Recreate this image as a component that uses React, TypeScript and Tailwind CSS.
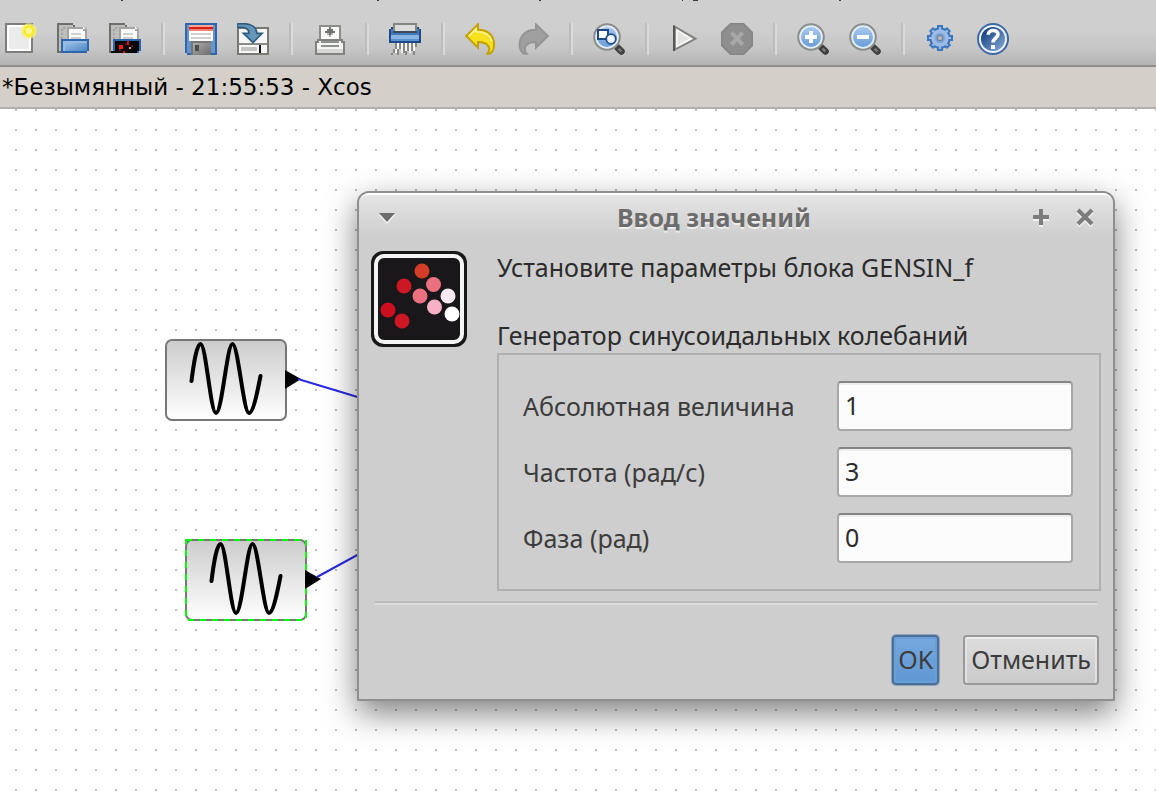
import React from "react";

type IconProps = { children: React.ReactNode; smooth?: boolean };

function Glyph({ children, smooth }: IconProps) {
  return (
    <svg viewBox="0 0 16 16" className="block size-8" shapeRendering={smooth ? "auto" : "crispEdges"} aria-hidden="true">
      {children}
    </svg>
  );
}

const FolderBack = () => (
  <>
    <path d="M0 0H8V1H9V2H15V8H14V13H2V15H0Z" fill="#bdbebb" />
    <path d="M0 0H8V1H9V2H8V1H1V14H3V15H0Z" fill="#6d6f6a" />
    <path d="M2 3H3V4H2ZM2 5H3V6H2ZM2 7H3V8H2ZM2 9H3V10H2ZM3 2H4V3H3Z" fill="#a2a49f" />
    <path d="M5 2H13L15 4V9H5Z" fill="#fafafa" />
    <path d="M5 2H13V3H15V8H14V4H13V3H6V8H5Z" fill="#a4a5a2" />
    <path d="M7 5H12V6H7ZM7 7H12V8H7Z" fill="#cfcfcf" />
  </>
);

const NewIcon = () => (
  <Glyph smooth>
    <rect x="0.5" y="0.5" width="13" height="14" fill="#ebebeb" stroke="#7d7f7a" />
    <rect x="1.5" y="1.5" width="11" height="12" fill="none" stroke="#fff" />
    <circle cx="12" cy="4" r="3.9" fill="#f5ee72" opacity="0.8" />
    <circle cx="12" cy="4" r="2.9" fill="#f9ec2e" />
    <circle cx="12" cy="4" r="1.5" fill="#fdf99a" />
  </Glyph>
);

const OpenIcon = () => (
  <Glyph>
    <defs>
      <linearGradient id="folder" x1="0" y1="0" x2="1" y2="1">
        <stop offset="0" stopColor="#a3c8ec" />
        <stop offset="1" stopColor="#4f88c6" />
      </linearGradient>
    </defs>
    <FolderBack />
    <path d="M2 8H16V14H15V15H2Z" fill="#2f65aa" />
    <path d="M3 9H15V14H3Z" fill="url(#folder)" />
    <path d="M3 9H15V10H4V14H3Z" fill="#93bbe4" />
  </Glyph>
);

const OpenScilabIcon = () => (
  <Glyph>
    <FolderBack />
    <path d="M2 8H16V14H15V15H1V14H2Z" fill="#2f65aa" />
    <path d="M3 9H15V14H14V15H1V14H3Z" fill="#050505" />
    <path d="M5 11H7V13H5Z" fill="#ff1a1a" />
    <path d="M9 9H10V11H9ZM7 14H8V15H7Z" fill="#d81515" />
    <path d="M8 10H9V11H8ZM5 13H6V14H5ZM11 11H12V12H11Z" fill="#6b0d0d" />
    <path d="M10 12H11V13H10Z" fill="#f2a0a0" />
  </Glyph>
);

const SaveIcon = () => (
  <Glyph>
    <defs>
      <linearGradient id="shutter" x1="0" y1="0" x2="1" y2="1">
        <stop offset="0" stopColor="#b5b5b5" />
        <stop offset="1" stopColor="#6b6b6b" />
      </linearGradient>
    </defs>
    <path d="M0 0H16V16H1V15H0Z" fill="#2f65aa" />
    <path d="M1 1H15V15H1Z" fill="#6695cd" />
    <path d="M2 1H14V9H2Z" fill="#fdfdfd" />
    <path d="M2 1H14V2H2Z" fill="#f7a69c" />
    <path d="M2 2H14V3H2Z" fill="#d81e0c" />
    <path d="M2 3H14V4H2Z" fill="#ec8375" />
    <path d="M3 5H13V6H3ZM3 7H13V8H3Z" fill="#d0d0d0" />
    <path d="M3 9H13V16H3Z" fill="url(#shutter)" />
    <path d="M3 9H13V10H4V16H3Z" fill="#777" />
    <path d="M5 11H7V14H5Z" fill="#4c4e50" />
  </Glyph>
);

const ExportIcon = () => (
  <Glyph>
    <path d="M0 2H16V16H0Z" fill="#777973" />
    <path d="M1 3H15V15H1Z" fill="#f6f6f6" />
    <path d="M1 10H15V11H1Z" fill="#898b86" />
    <path d="M2 12H10V14H2Z" fill="#c4c5c2" />
    <path d="M11 11H12V15H11Z" fill="#111" />
    <g shapeRendering="auto">
      <path d="M0 .5C5-.2 9.7.8 10 5.2H12.6L8 9.8 3.2 5.2H6C6 2.6 3.8 1.8 0 2.2Z" fill="#6596b8" stroke="#2d5c7c" strokeWidth="0.8" />
    </g>
  </Glyph>
);

const PrintIcon = () => (
  <Glyph>
    <path d="M3 1H14V9H3Z" fill="#8c8e89" />
    <path d="M4 2H13V8H4Z" fill="#fbfbfb" />
    <path d="M8 2H9V3H8ZM7 3H10V4H7ZM6 4H11V5H6ZM8 5H9V6H8Z" fill="#70726e" />
    <path d="M7 5H8V6H7ZM9 5H10V6H9ZM8 6H9V7H8Z" fill="#b4b5b2" />
    <path d="M2 8H15V9H16V16H1V9H2Z" fill="#80827d" />
    <path d="M3 9H14V10H15V13H2V10H3Z" fill="#f5f5f5" />
    <path d="M4 9H13V10H4ZM4 11H13V12H4Z" fill="#8f918c" />
    <path d="M2 13H15V15H2Z" fill="#d8d9d6" />
  </Glyph>
);

const ShredIcon = () => (
  <Glyph>
    <path d="M1 2H15V3H16V10H0V3H1Z" fill="#204a87" />
    <path d="M1 3H15V9H1Z" fill="#4179bf" />
    <path d="M2 0H14V5H2Z" fill="#858782" />
    <path d="M3 1H13V4H3Z" fill="#dcdcda" />
    <path d="M2 4H14V5H2Z" fill="#3c4a5c" />
    <path d="M1 6H15V8H1Z" fill="#8bb4e2" />
    <path d="M1 8H15V9H1Z" fill="#5a91d0" />
    <path d="M3 10H4V13H3ZM2 13H3V15H2ZM1 15H2V16H1ZM5 10H6V13H5ZM4 13H5V16H4ZM7 10H8V15H7ZM9 10H10V14H9ZM8 14H9V16H8ZM11 10H12V14H11ZM12 14H13V16H12ZM13 10H14V12H13Z" fill="#868883" />
    <path d="M4 10H5V13H4ZM3 13H4V15H3ZM6 10H7V15H6ZM8 10H9V14H8ZM10 10H11V15H10ZM12 10H13V14H12Z" fill="#f4f4f4" />
  </Glyph>
);

const UndoIcon = () => (
  <Glyph smooth>
    <path d="M.6 6.5 6.5.7V3.4C11.5 3.3 14.6 6.3 14.5 10.8 14.5 13 13.8 15 12 15.4H11.2C13 13 12.2 9.5 6.5 9.5V12.3Z" fill="#f7e01e" stroke="#c4a000" />
    <path d="M2 6.5 5.5 3V4.4C10 4.4 12.5 6 13.4 9" fill="none" stroke="#fcf3a0" strokeWidth="0.8" />
  </Glyph>
);

const RedoIcon = () => (
  <Glyph smooth>
    <path d="M15.4 6.5 9.5.7V3.4C4.5 3.3 1.4 6.3 1.3 10.8 1.3 13 2.2 15 4 15.4H4.8C3 13 3.8 9.5 9.5 9.5V12.3Z" fill="#a0a0a0" stroke="#949494" />
  </Glyph>
);

const Lens = ({ children }: { children: React.ReactNode }) => (
  <Glyph smooth>
    <defs>
      <linearGradient id="lens" x1="0" y1="0" x2="0" y2="1">
        <stop offset="0" stopColor="#a9c9ec" />
        <stop offset="1" stopColor="#6a9cd6" />
      </linearGradient>
    </defs>
    <path d="M12.4 12.4 14.2 14.2" stroke="#3f413f" strokeWidth="3.4" strokeLinecap="round" />
    <path d="M12.8 12.8 14.2 14.2" stroke="#7c7c7c" strokeWidth="1.2" />
    <circle cx="7" cy="7" r="6.4" fill="#e2eefa" stroke="#8b8d88" />
    <circle cx="7" cy="7" r="5" fill="url(#lens)" />
    {children}
  </Glyph>
);

const FitIcon = () => (
  <Lens>
    <rect x="2.5" y="3.5" width="5" height="4.5" fill="#fff" stroke="#204a87" />
    <circle cx="9" cy="8" r="2.4" fill="#eef5fc" stroke="#204a87" strokeWidth="0.9" />
  </Lens>
);

const ZoomInIcon = () => (
  <Lens>
    <path d="M6 4H8V6H10V8H8V10H6V8H4V6H6Z" fill="#fff" />
  </Lens>
);

const ZoomOutIcon = () => (
  <Lens>
    <path d="M4 6H10V8H4Z" fill="#fff" />
  </Lens>
);

const PlayIcon = () => (
  <Glyph smooth>
    <path d="M2.9 1.9V13.3L13.2 7.9Z" fill="#e2e2e0" stroke="#80827d" />
    <path d="M2.5 1.2V14" stroke="#565853" />
    <path d="M4 3.5V11.6L11 7.8Z" fill="none" stroke="#fbfbfb" strokeWidth="0.8" />
  </Glyph>
);

const StopIcon = () => (
  <Glyph smooth>
    <path d="M4.8.3H11.2L15.7 4.8V11.2L11.2 15.7H4.8L.3 11.2V4.8Z" fill="#8e8e8e" stroke="#858585" strokeWidth="0.8" />
    <path d="M5.2 4.8 10.8 10.8M10.8 4.8 5.2 10.8" stroke="#a8a8a8" strokeWidth="2" />
  </Glyph>
);

const GearIcon = () => (
  <Glyph smooth>
    <path d="M7.5 1V14M1 7.5H14M3 3 12 12M12 3 3 12" stroke="#3b75be" strokeWidth="3" />
    <circle cx="7.5" cy="7.5" r="4.9" fill="#9bbce4" stroke="#3b75be" />
    <path d="M7.5 2V13M2 7.500H13M3.700 3.700 11.300 11.300M11.300 3.700 3.700 11.300" stroke="#9bbce4" strokeWidth="1.1" />
    <circle cx="7.5" cy="7.5" r="2.6" fill="#7ea6d8" />
    <circle cx="7.5" cy="7.5" r="1.4" fill="#bcbcb6" stroke="#6c86a8" strokeWidth="0.7" />
  </Glyph>
);

const HelpIcon = () => (
  <Glyph smooth>
    <defs>
      <linearGradient id="help" x1="0" y1="0" x2="1" y2="1">
        <stop offset="0.2" stopColor="#204a87" />
        <stop offset="1" stopColor="#8aaedb" />
      </linearGradient>
    </defs>
    <circle cx="8" cy="8" r="7.5" fill="#eaf1fa" stroke="#3e68a3" strokeWidth="1" />
    <circle cx="8" cy="8" r="6" fill="url(#help)" />
    <path d="M5.6 5.9C5.6 3 10.6 3.2 10.5 5.7 10.4 7.6 8 7.6 8 9.8" fill="none" stroke="#fff" strokeWidth="1.8" />
    <path d="M7 11H9V13H7Z" fill="#fff" />
  </Glyph>
);

const toolGroups: { label: string; icon: React.ReactNode }[][] = [
  [
    { label: "Создать", icon: <NewIcon /> },
    { label: "Открыть", icon: <OpenIcon /> },
    { label: "Открыть файл в Scilab", icon: <OpenScilabIcon /> },
  ],
  [
    { label: "Сохранить", icon: <SaveIcon /> },
    { label: "Сохранить как", icon: <ExportIcon /> },
  ],
  [{ label: "Печать", icon: <PrintIcon /> }],
  [{ label: "Удалить", icon: <ShredIcon /> }],
  [
    { label: "Отменить действие", icon: <UndoIcon /> },
    { label: "Вернуть действие", icon: <RedoIcon /> },
  ],
  [{ label: "Вписать в окно", icon: <FitIcon /> }],
  [
    { label: "Запустить", icon: <PlayIcon /> },
    { label: "Остановить", icon: <StopIcon /> },
  ],
  [
    { label: "Увеличить", icon: <ZoomInIcon /> },
    { label: "Уменьшить", icon: <ZoomOutIcon /> },
  ],
  [
    { label: "Палитры", icon: <GearIcon /> },
    { label: "Справка", icon: <HelpIcon /> },
  ],
];

function Toolbar() {
  return (
    <div className="overflow-hidden border-b-2 border-[#8f8f8f] bg-linear-to-b from-[#cfcfcf] from-45% via-[#c6c6c6] via-75% to-[#b3b3b3]">
      <svg className="block h-px w-full" aria-hidden="true" shapeRendering="crispEdges">
        <path d="M121 0h2v1h-2ZM377 0h2v1h-2ZM539 0h2v1h-2ZM682 0h1v1h-1ZM693 0h5v1h-5ZM839 0h2v1h-2Z" fill="#3c3c3c" />
      </svg>
      <div role="toolbar" className="flex gap-5 pt-[22px] pb-2.5 pl-[5px]">
        {toolGroups.map((group, i) => (
          <React.Fragment key={i}>
            {i > 0 && <div className="h-8 w-1 shrink-0 border-r-2 border-l-2 border-r-[#dadada] border-l-[#bdbdbd]" />}
            {group.map((tool) => (
              <button key={tool.label} type="button" aria-label={tool.label} className="size-8 shrink-0">
                {tool.icon}
              </button>
            ))}
          </React.Fragment>
        ))}
      </div>
    </div>
  );
}

function SineBlock({ x, y, selected }: { x: number; y: number; selected?: boolean }) {
  return (
    <g transform={`translate(${x} ${y})`}>
      <rect x="1" y="1" width="120" height="80" rx="6" fill="url(#block)" stroke="#777" strokeWidth="2" />
      {selected && (
        <rect x="1" y="1" width="120" height="80" fill="none" stroke="#00ff00" strokeWidth="2" strokeDasharray="6 6" shapeRendering="crispEdges" />
      )}
      <path
        d="M26.5 42C29 22 32 5 35.500 5C41 5 45.500 74 51 74C57 74 62 5 67.500 5C73 5 78.500 74 84 74C88 74 92 55 95.500 37"
        fill="none"
        stroke="#000"
        strokeWidth="4"
        strokeLinecap="round"
      />
      <path d="M120 31 136 40 120 50Z" fill="#000" />
    </g>
  );
}

function Diagram() {
  return (
    <svg className="absolute inset-0 size-full" role="img" aria-label="Диаграмма">
      <defs>
        <pattern id="dots" x="15" y="0" width="20" height="20" patternUnits="userSpaceOnUse">
          <rect width="2" height="2" fill="#bcbcbc" />
        </pattern>
        <linearGradient id="block" x1="0" y1="0" x2="0" y2="1">
          <stop offset="0" stopColor="#cccccc" />
          <stop offset="1" stopColor="#ffffff" />
        </linearGradient>
      </defs>
      <rect width="100%" height="100%" fill="url(#dots)" />
      <SineBlock x={165} y={230} />
      <SineBlock x={185} y={430} selected />
      <path d="M298 270 480 325M317 468 480 379" fill="none" stroke="#2a2ae6" strokeWidth="2" />
    </svg>
  );
}

function ScilabLogo() {
  return (
    <svg viewBox="0 0 96 96" className="block size-24 shrink-0" aria-hidden="true">
      <rect width="96" height="96" rx="12" fill="#1a171b" />
      <rect x="5" y="5" width="86" height="86" rx="8" fill="#1a171b" stroke="#f4f4f4" strokeWidth="4" />
      <g>
        <circle cx="51" cy="20" r="7.500" fill="#d43e26" />
        <circle cx="33" cy="35" r="7.500" fill="#ce1724" />
        <circle cx="62.500" cy="33.500" r="7.500" fill="#ec7180" />
        <circle cx="49" cy="45" r="7.500" fill="#ec7180" />
        <circle cx="77" cy="45" r="7.500" fill="#fae9f0" />
        <circle cx="63.500" cy="56" r="7.500" fill="#f6b1c5" />
        <circle cx="81" cy="63" r="7.500" fill="#ffffff" />
        <circle cx="17" cy="59" r="7.500" fill="#cc0e1e" />
        <circle cx="31" cy="70" r="7.500" fill="#ce1724" />
      </g>
    </svg>
  );
}

const fields = [
  { id: "magnitude", label: "Абсолютная величина", value: "1" },
  { id: "frequency", label: "Частота (рад/с)", value: "3" },
  { id: "phase", label: "Фаза (рад)", value: "0" },
];

function ParameterDialog() {
  return (
    <div
      role="dialog"
      aria-labelledby="dialog-title"
      className="absolute top-[82px] left-[357px] w-[758px] rounded-t-xl border-2 border-[#8f8f8f] bg-[#cecece] font-['Noto_Sans',sans-serif] text-[25px] shadow-[0_12px_32px_rgba(0,0,0,0.5)]"
    >
      <div className="flex h-[50px] items-center rounded-t-[10px] border-t-2 border-white bg-linear-to-b from-[#e4e4e4] to-[#cecece] to-90% px-[18px] pb-1">
        <button type="button" aria-label="Меню окна" className="flex h-8 w-5 items-center">
          <svg viewBox="0 0 20 16" className="h-4 w-5" aria-hidden="true">
            <path d="M2 6H18L10 15Z" fill="#f4f4f4" />
            <path d="M2 4H18L10 13Z" fill="#6c6c6c" />
          </svg>
        </button>
        <h1 id="dialog-title" className="flex-1 text-center leading-8 font-bold text-[#6c6c6c] [text-shadow:0_2px_0_#eeeeee]">
          Ввод значений
        </h1>
        <div className="flex gap-6">
          <button type="button" aria-label="Развернуть">
            <svg viewBox="0 0 20 20" className="size-5" aria-hidden="true">
              <path d="M2 12H18M10 4V20" stroke="#f2f2f2" strokeWidth="4" />
              <path d="M2 10H18M10 2V18" stroke="#7c7c7c" strokeWidth="4" />
            </svg>
          </button>
          <button type="button" aria-label="Закрыть">
            <svg viewBox="0 0 20 20" className="size-5" aria-hidden="true">
              <path d="M3 5 17 19M17 5 3 19" stroke="#f2f2f2" strokeWidth="4" />
              <path d="M3 3 17 17M17 3 3 17" stroke="#7c7c7c" strokeWidth="4" />
            </svg>
          </button>
        </div>
      </div>
      <form>
        <div className="flex gap-[30px] px-3 pt-2">
          <ScilabLogo />
          <div className="min-w-0 flex-1 leading-8 text-[#2c2c2c]">
            <p>Установите параметры блока GENSIN_f</p>
            <p className="pt-9">Генератор синусоидальных колебаний</p>
            <div className="mt-0.5 flex flex-col gap-4 border-2 border-[#b0b0b0] py-[26px] pr-[26px] pl-6 text-[#3c3c3c]">
              {fields.map((f) => (
                <div key={f.id} className="flex items-center justify-between">
                  <label htmlFor={f.id}>{f.label}</label>
                  <input
                    id={f.id}
                    type="text"
                    defaultValue={f.value}
                    className="h-[50px] w-[236px] rounded-sm border-2 border-[#a8a8a8] border-t-[#858585] bg-[#fcfcfc] px-1.5 pb-0.5 text-[#2c2c2c] shadow-[inset_0_2px_0_#eeeeee]"
                  />
                </div>
              ))}
            </div>
          </div>
        </div>
        <hr className="mx-4 mt-2.5 h-1 border-t-2 border-b-2 border-t-[#bcbcbc] border-b-[#dadada]" />
        <div className="flex justify-end gap-6 px-3.5 pt-[30px] pb-3.5 text-[#3c3c3c]">
          <button
            type="submit"
            className="h-[50px] rounded-sm border-2 border-[#4f7096] bg-linear-to-b from-[#76a8de] to-[#5f98d4] px-1 shadow-[0_0_0_1px_#8ba3c0,inset_0_0_0_2px_#6a9fd8]"
          >
            OK
          </button>
          <button
            type="button"
            className="h-[50px] rounded-sm border-2 border-[#999999] bg-linear-to-b from-[#dddddd] to-[#cacaca] px-1.5 shadow-[inset_0_2px_0_#ededed,inset_2px_0_0_#e2e2e2,inset_-2px_0_0_#e2e2e2]"
          >
            Отменить
          </button>
        </div>
      </form>
    </div>
  );
}

export default function App() {
  return (
    <div className="flex min-h-screen flex-col bg-white">
      <Toolbar />
      <div className="flex h-[42px] items-center border-b-2 border-[#b0b0b0] bg-[#d4cfc8] pl-0.5 font-['DejaVu_Sans',sans-serif] text-[23px] text-black">
        *Безымянный - 21:55:53 - Xcos
      </div>
      <main className="relative flex-1 overflow-hidden">
        <Diagram />
        <ParameterDialog />
      </main>
    </div>
  );
}
